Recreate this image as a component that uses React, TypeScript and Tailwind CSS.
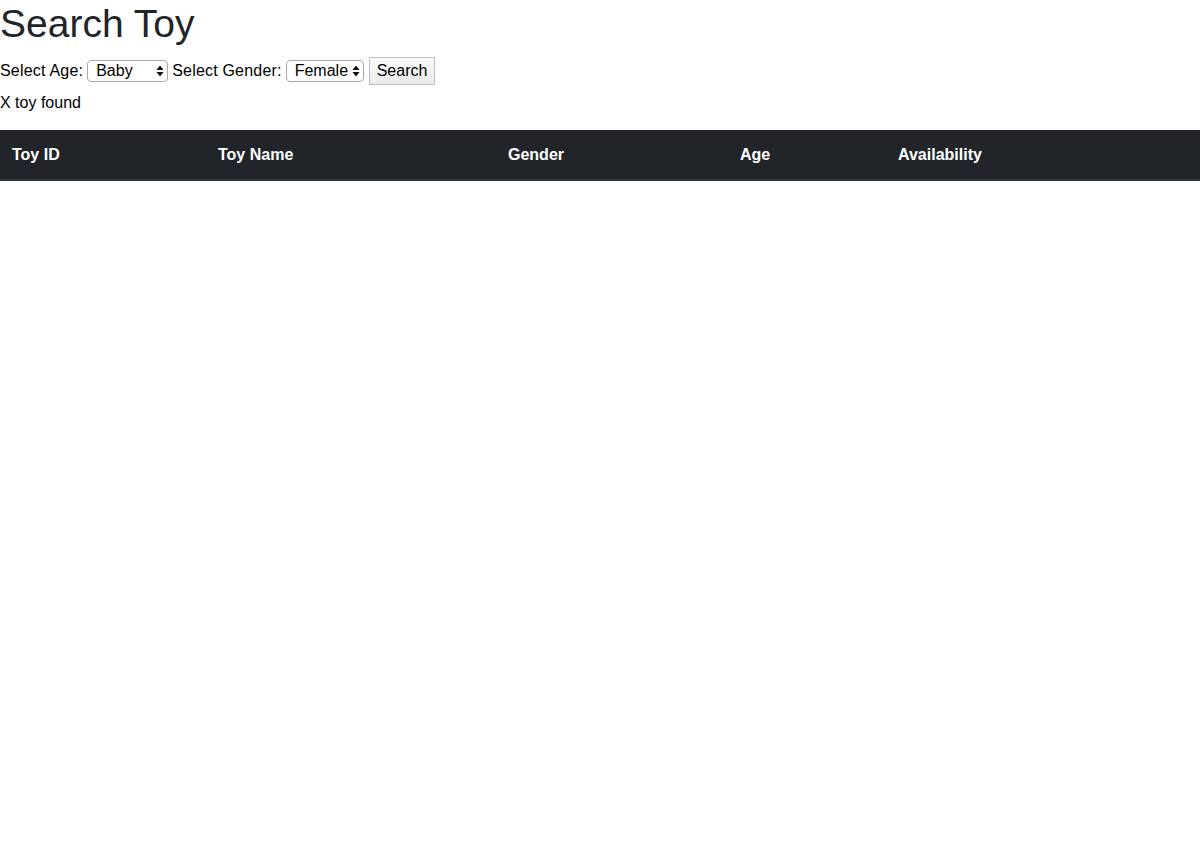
import React, { useState } from 'react';

const Arrows: React.FC = () => (
  <svg width="8" height="12" viewBox="0 0 8 12" className="pointer-events-none absolute right-[4px] top-1/2 -translate-y-1/2">
    <path d="M4 0.5 L7.5 5 L0.5 5 Z" fill="#111" />
    <path d="M4 11.5 L7.5 7 L0.5 7 Z" fill="#111" />
  </svg>
);

const App: React.FC = () => {
  const [age, setAge] = useState('Baby');
  const [gender, setGender] = useState('Female');

  return (
    <div className="min-h-screen bg-white text-[#212529] font-['Liberation_Sans',Arial,sans-serif]">
      <h1 className="mb-[9px] text-[39px] leading-[48px] font-normal">Search Toy</h1>
      <form onSubmit={(e) => e.preventDefault()} className="flex h-[28px] items-center gap-[4px] text-[16px] text-black">
        <label className="tracking-[0.2px]">Select Age:</label>
        <div className="relative">
          <select
            value={age}
            onChange={(e) => setAge(e.target.value)}
            className="h-[22px] w-[81px] appearance-none rounded-[4px] border border-[#a9a9a9] bg-white pl-[8px] text-[16px] leading-[20px]"
          >
            <option>Baby</option>
            <option>Toddler</option>
            <option>Kid</option>
          </select>
          <Arrows />
        </div>
        <label className="tracking-[0.2px]">Select Gender:</label>
        <div className="relative">
          <select
            value={gender}
            onChange={(e) => setGender(e.target.value)}
            className="h-[22px] w-[78px] appearance-none rounded-[4px] border border-[#a9a9a9] bg-white pl-[8px] text-[16px] leading-[20px]"
          >
            <option>Female</option>
            <option>Male</option>
          </select>
          <Arrows />
        </div>
        <button type="submit" className="ml-[1px] h-[28px] border border-[#bdbdbd] bg-gradient-to-b from-[#fafafa] to-[#ececec] px-[7px] text-[16px]">
          Search
        </button>
      </form>
      <p className="mt-[6px] mb-[15px] text-[16px] leading-[24px] text-black">X toy found</p>
      <table className="w-full table-fixed border-collapse text-left">
        <thead>
          <tr className="bg-[#212529] text-white">
            <th className="w-[206px] border-b-2 border-[#32383e] px-3 pt-[13px] pb-3 text-[16px] leading-[24px] font-bold">Toy ID</th>
            <th className="w-[290px] border-b-2 border-[#32383e] px-3 pt-[13px] pb-3 text-[16px] leading-[24px] font-bold">Toy Name</th>
            <th className="w-[232px] border-b-2 border-[#32383e] px-3 pt-[13px] pb-3 text-[16px] leading-[24px] font-bold">Gender</th>
            <th className="w-[158px] border-b-2 border-[#32383e] px-3 pt-[13px] pb-3 text-[16px] leading-[24px] font-bold">Age</th>
            <th className="border-b-2 border-[#32383e] px-3 pt-[13px] pb-3 text-[16px] leading-[24px] font-bold">Availability</th>
          </tr>
        </thead>
        <tbody></tbody>
      </table>
    </div>
  );
};

export default App;
